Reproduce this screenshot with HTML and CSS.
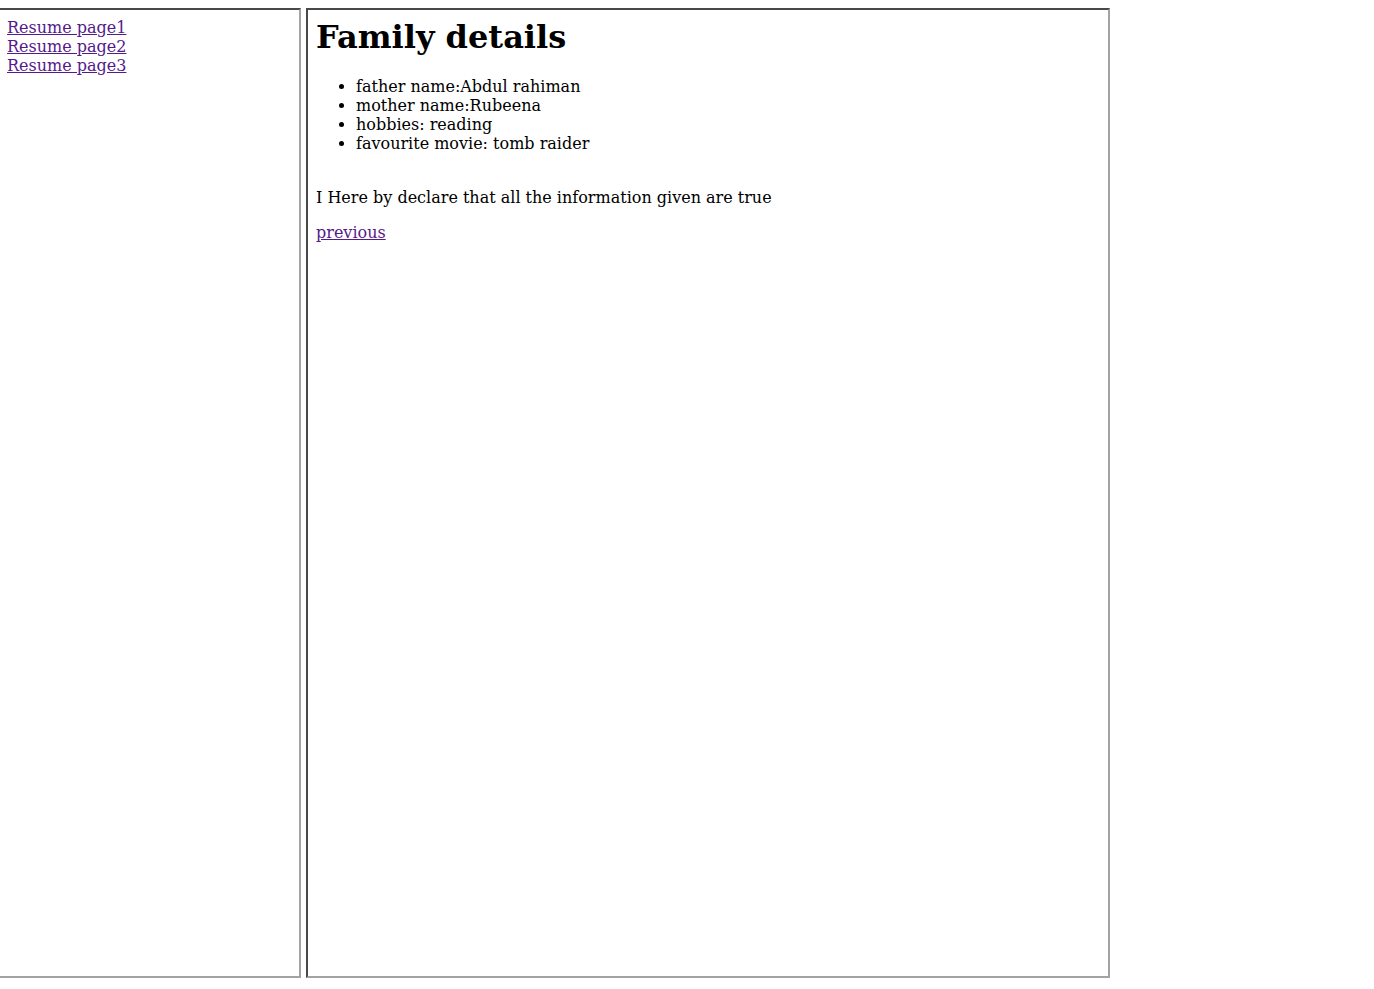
FILE: index.html
```html
<!DOCTYPE html>
<html>
<head>
<meta charset="utf-8">
<title>Resume</title>
<link rel="stylesheet" href="styles.css">
</head>
<body>
<div class="frames">
  <nav class="frame frame-nav">
    <div class="frame-body">
      <a href="#" class="link">Resume page1</a><br>
      <a href="#" class="link">Resume page2</a><br>
      <a href="#" class="link">Resume page3</a>
    </div>
  </nav>
  <main class="frame frame-main">
    <div class="frame-body">
      <h1 class="title">Family details</h1>
      <ul class="details">
        <li>father name:Abdul rahiman</li>
        <li>mother name:Rubeena</li>
        <li>hobbies: reading</li>
        <li>favourite movie: tomb raider</li>
      </ul>
      <p class="declare">I Here by declare that all the information given are true</p>
      <p class="nav-p"><a href="#" class="link">previous</a></p>
    </div>
  </main>
</div>
</body>
</html>
```

FILE: styles.css
```css
html, body {
  margin: 0;
  padding: 0;
  background: #fff;
}
body {
  padding-top: 8px;
  font-family: "DejaVu Serif", serif;
  font-size: 16px;
  color: #000;
}
.frames {
  display: flex;
  align-items: flex-start;
  gap: 5px;
  margin-left: -3px;
}
.frame {
  box-sizing: content-box;
  height: 966px;
  border-width: 2px;
  border-style: solid;
  border-color: #494949 #a3a3a3 #a3a3a3 #494949;
  overflow: hidden;
  flex: none;
}
.frame-nav {
  width: 300px;
}
.frame-main {
  width: 800px;
}
.frame-body {
  padding: 8px;
}
.link {
  color: #551a8b;
  text-decoration: underline;
}
.title {
  font-size: 32px;
  font-weight: bold;
  margin: 0 0 21px;
}
.details {
  margin: 0;
  padding-left: 40px;
}
.declare {
  margin: 35px 0 16px;
}
.nav-p {
  margin: 16px 0;
}
```
